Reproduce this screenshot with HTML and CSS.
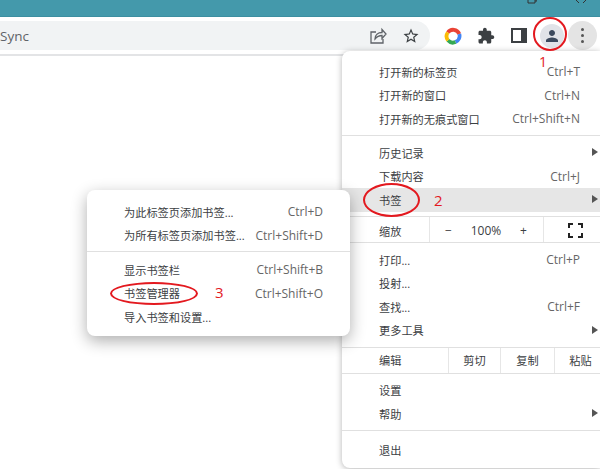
FILE: index.html
```html
<!DOCTYPE html>
<html lang="zh-CN">
<head>
    <meta charset="UTF-8">
    <title>书签管理器</title>
    <link rel="stylesheet" href="styles.css">
</head>
<body>
    <div class="titlebar">
        <svg width="12" height="4" viewBox="0 0 12 4"><path d="M3 0v3h7V0M10 1h2V0" fill="none" stroke="#333" stroke-width="1"/></svg>
        <svg width="12" height="4" viewBox="0 0 12 4"><path d="M1 0l3 3M11 0L8 3" fill="none" stroke="#333" stroke-width="1"/></svg>
    </div>

    <div class="toolbar">
        <div class="omnibox">
            <span class="url">Sync</span>
            <div class="omnibox-icons">
                <svg width="18" height="18" viewBox="0 0 18 18"><path d="M7 5H2v11h12v-4M6 12c0-4 3-6.5 7-6.5V2.500L17 7l-4 4.500V8.500c-3 0-5 1-7 3.500z" fill="none" stroke="#5f6368" stroke-width="1.3"/></svg>
                <svg width="18" height="18" viewBox="0 0 24 24"><path fill="#3c4043" d="M22 9.24l-7.19-.62L12 2 9.19 8.63 2 9.24l5.46 4.73L5.82 21 12 17.27 18.18 21l-1.63-7.03L22 9.24zM12 15.4l-3.76 2.27 1-4.28-3.32-2.88 4.38-.38L12 6.1l1.71 4.04 4.38.38-3.32 2.88 1 4.28L12 15.4z"/></svg>
            </div>
        </div>
        <div class="slot">
            <svg width="18" height="18" viewBox="0 0 18 18" fill="none" stroke-width="3.8">
                <path d="M3.8 5.500A6.600 6.600 0 0 1 15.3 7" stroke="#ea4335"/>
                <path d="M15.3 7A6.600 6.600 0 0 1 11.5 15" stroke="#4285f4"/>
                <path d="M11.5 15.100A6.600 6.600 0 0 1 4 13.3" stroke="#34a853"/>
                <path d="M4 13.3A6.600 6.600 0 0 1 3.8 5.500" stroke="#fbbc04"/>
            </svg>
        </div>
        <div class="slot">
            <svg width="18" height="18" viewBox="0 0 24 24"><path fill="#3c4043" d="M20.5 11H19V7c0-1.1-.9-2-2-2h-4V3.500C13 2.120 11.880 1 10.500 1S8 2.120 8 3.500V5H4c-1.100 0-1.990.9-1.990 2v3.800H3.500c1.490 0 2.700 1.210 2.700 2.700s-1.210 2.700-2.700 2.700H2V20c0 1.100.9 2 2 2h3.800v-1.500c0-1.490 1.210-2.700 2.700-2.700 1.490 0 2.700 1.210 2.700 2.700V22H17c1.100 0 2-.9 2-2v-4h1.500c1.380 0 2.500-1.120 2.500-2.500S21.880 11 20.500 11z"/></svg>
        </div>
        <div class="slot">
            <svg width="16" height="15" viewBox="0 0 16 15"><path fill="#3c4043" fill-rule="evenodd" d="M0 0h16v15H0zM2 2v11h8V2z"/></svg>
        </div>
        <div class="slot">
            <span class="avatar">
                <svg width="18" height="18" viewBox="0 0 24 24"><path fill="#3c4a5e" d="M12 12c2.210 0 4-1.790 4-4s-1.790-4-4-4-4 1.790-4 4 1.790 4 4 4zm0 2c-2.670 0-8 1.340-8 4v2h16v-2c0-2.660-5.330-4-8-4z"/></svg>
            </span>
        </div>
        <span class="kebab">
            <i></i><i></i><i></i>
        </span>
    </div>

    <div class="menu">
        <div class="group">
            <div class="item"><span>打开新的标签页</span><span class="keys">Ctrl+T</span></div>
            <div class="item"><span>打开新的窗口</span><span class="keys">Ctrl+N</span></div>
            <div class="item"><span>打开新的无痕式窗口</span><span class="keys">Ctrl+Shift+N</span></div>
        </div>
        <div class="group">
            <div class="item"><span>历史记录</span><span class="arrow"></span></div>
            <div class="item"><span>下载内容</span><span class="keys">Ctrl+J</span></div>
            <div class="item item-active"><span>书签</span><span class="arrow"></span></div>
        </div>
        <div class="cells zoom-row">
            <span class="cells-label">缩放</span>
            <div class="zoom-controls">
                <span>−</span><span>100%</span><span>+</span>
            </div>
            <div class="zoom-full">
                <svg width="15" height="15" viewBox="0 0 15 15"><path d="M1 5V1h4M10 1h4v4M14 10v4h-4M5 14H1v-4" fill="none" stroke="#222" stroke-width="2"/></svg>
            </div>
        </div>
        <div class="group">
            <div class="item"><span>打印...</span><span class="keys">Ctrl+P</span></div>
            <div class="item"><span>投射...</span></div>
            <div class="item"><span>查找...</span><span class="keys">Ctrl+F</span></div>
            <div class="item"><span>更多工具</span><span class="arrow"></span></div>
        </div>
        <div class="cells edit-row">
            <span class="cells-label">编辑</span>
            <span class="edit-btn">剪切</span>
            <span class="edit-btn">复制</span>
            <span class="edit-btn">粘贴</span>
        </div>
        <div class="group">
            <div class="item"><span>设置</span></div>
            <div class="item"><span>帮助</span><span class="arrow"></span></div>
        </div>
        <div class="group group-last">
            <div class="item"><span>退出</span></div>
        </div>
    </div>

    <div class="submenu">
        <div class="group group-first">
            <div class="item"><span>为此标签页添加书签...</span><span class="keys">Ctrl+D</span></div>
            <div class="item"><span>为所有标签页添加书签...</span><span class="keys">Ctrl+Shift+D</span></div>
        </div>
        <div class="group group-tail">
            <div class="item"><span>显示书签栏</span><span class="keys">Ctrl+Shift+B</span></div>
            <div class="item"><span>书签管理器</span><span class="keys">Ctrl+Shift+O</span></div>
            <div class="item"><span>导入书签和设置...</span></div>
        </div>
    </div>

    <!-- red annotations drawn over the screenshot -->
    <div class="mark mark-avatar"></div>
    <div class="mark mark-bookmarks"></div>
    <div class="mark mark-manager"></div>
    <span class="step step-1">1</span>
    <span class="step step-2">2</span>
    <span class="step step-3">3</span>
</body>
</html>
```

FILE: styles.css
```css
body {
    margin: 0;
    width: 600px;
    height: 469px;
    overflow: hidden;
    position: relative;
    background: white;
    font-family: "Open Sans", "Noto Sans CJK SC", sans-serif;
    font-size: 11.2px;
    color: #3c4043;
}
.titlebar {
    height: 16px;
    background-color: #4499ab;
    border-bottom: 1px solid #3d8fa1;
    display: flex;
    justify-content: flex-end;
    align-items: flex-start;
    gap: 38px;
    padding-right: 13px;
}
.toolbar {
    height: 37px;
    display: flex;
    align-items: center;
    border-bottom: 2px solid #e3e4e6;
}
.omnibox {
    width: 430px;
    height: 29px;
    background-color: #f1f3f4;
    border-radius: 0 15px 15px 0;
    display: flex;
    justify-content: space-between;
    align-items: center;
    padding-right: 10px;
    box-sizing: border-box;
    margin-right: 6px;
}
.url {
    font-size: 13.5px;
    color: #5f6368;
}
.omnibox-icons {
    display: flex;
    gap: 15px;
}
.slot {
    width: 33px;
    height: 29px;
    display: flex;
    justify-content: center;
    align-items: center;
}
.avatar {
    width: 24px;
    height: 24px;
    border-radius: 50%;
    background-color: #e1e3e8;
    display: flex;
    justify-content: center;
    align-items: center;
}
.kebab {
    width: 29px;
    height: 29px;
    border-radius: 50%;
    background-color: #e4e4e4;
    display: flex;
    flex-direction: column;
    justify-content: center;
    align-items: center;
    gap: 3px;
}
.kebab i {
    width: 3px;
    height: 3px;
    border-radius: 50%;
    background-color: #555;
}

/* menus */
.menu, .submenu {
    position: absolute;
    background: white;
    box-sizing: border-box;
}
.menu {
    left: 342px;
    top: 51px;
    width: 258px;
    height: 417px;
    border-radius: 8px 0 0 8px;
    padding-top: 4px;
    box-shadow: 0 1px 6px rgba(0, 0, 0, 0.3);
}
.submenu {
    left: 87px;
    top: 190px;
    width: 263px;
    height: 146px;
    border-radius: 8px;
    padding-top: 5px;
    box-shadow: 0 5px 16px rgba(0, 0, 0, 0.32);
}
.group {
    padding: 5px 0 4.5px;
    border-bottom: 1px solid #e0e0e0;
}
.group-last {
    border-bottom: none;
    padding-top: 7px;
}
.group-first {
    padding-bottom: 4px;
}
.group-tail {
    border-bottom: none;
    padding-top: 6px;
}
.item {
    height: 23.5px;
    display: flex;
    justify-content: space-between;
    align-items: center;
    padding: 0 20px 0 37px;
    position: relative;
}
.submenu .item {
    padding: 0 27px 0 37px;
}
.item-active {
    background-color: #e6e6e6;
}
.keys {
    color: #666;
    font-size: 12px;
}
.arrow {
    position: absolute;
    right: 2px;
    top: 7px;
    border-left: 6px solid #555;
    border-top: 4.5px solid transparent;
    border-bottom: 4.5px solid transparent;
}

/* zoom and edit rows share the same cell layout */
.cells {
    display: flex;
    align-items: stretch;
    height: 25px;
    border-bottom: 1px solid #e0e0e0;
}
.cells-label {
    padding-left: 37px;
    display: flex;
    align-items: center;
    box-sizing: border-box;
}
.zoom-row .cells-label {
    width: 87px;
    padding-top: 2px;
}
.zoom-controls {
    width: 115px;
    border-left: 1px solid #e6e6e6;
    border-right: 1px solid #e6e6e6;
    display: flex;
    justify-content: space-between;
    align-items: center;
    padding: 2px 16px 0 15px;
    box-sizing: border-box;
    font-size: 12px;
}
.zoom-full {
    flex: 1;
    display: flex;
    justify-content: flex-end;
    align-items: center;
    padding: 2px 17px 0 0;
}
.edit-row .cells-label {
    width: 106px;
}
.edit-btn {
    width: 52px;
    border-left: 1px solid #e6e6e6;
    display: flex;
    justify-content: center;
    align-items: center;
    box-sizing: border-box;
}
.edit-btn:nth-child(3) {
    width: 54px;
}
.edit-btn:last-child {
    width: 46px;
    padding-left: 6px;
}

/* annotations */
.mark {
    position: absolute;
    border: 2px solid #e3191f;
    border-radius: 50%;
    box-sizing: border-box;
}
.mark-avatar {
    left: 533px;
    top: 17px;
    width: 34px;
    height: 34px;
}
.mark-bookmarks {
    left: 363px;
    top: 183px;
    width: 57px;
    height: 34px;
}
.mark-manager {
    left: 110px;
    top: 282px;
    width: 88px;
    height: 23px;
}
.step {
    position: absolute;
    color: #e3191f;
    font-size: 15px;
    line-height: 18px;
}
.step-1 {
    left: 539px;
    top: 55px;
    font-size: 14px;
    line-height: 14px;
}
.step-2 {
    left: 434px;
    top: 191px;
}
.step-3 {
    left: 215px;
    top: 283px;
}
```
